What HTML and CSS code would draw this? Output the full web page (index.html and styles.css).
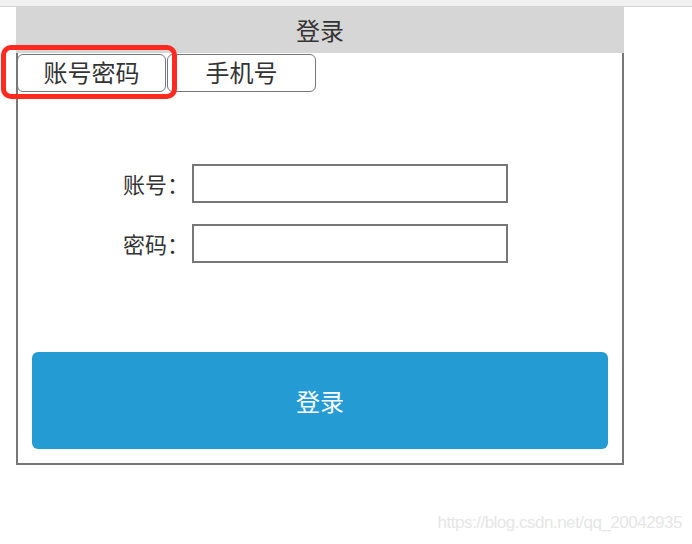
FILE: index.html
```html
<!DOCTYPE html>
<html lang="zh-CN">
<head>
<meta charset="utf-8">
<title>登录</title>
<link rel="stylesheet" href="styles.css">
</head>
<body>
<div class="topbar"></div>
<div class="wrap">
  <div class="header">登录</div>
  <div class="panel">
    <div class="tabs">
      <div class="tab">账号密码</div>
      <div class="tab">手机号</div>
    </div>
    <div class="form">
      <div class="row">
        <span class="label">账号：</span>
        <div class="input"></div>
      </div>
      <div class="row">
        <span class="label">密码：</span>
        <div class="input"></div>
      </div>
    </div>
    <div class="btn">登录</div>
  </div>
</div>
<div class="highlight"></div>
<div class="watermark">https://blog.csdn.net/qq_20042935</div>
</body>
</html>
```

FILE: styles.css
```css
html, body {
  margin: 0;
  padding: 0;
  background: #fff;
}
body {
  position: relative;
  width: 692px;
  height: 544px;
  overflow: hidden;
  font-family: "Noto Sans CJK SC", "Noto Sans", sans-serif;
  color: #333;
}
.topbar {
  height: 6px;
  background: #f1f1f1;
  border-bottom: 1px solid #d2d2d2;
}
.wrap {
  margin-left: 16px;
  width: 608px;
}
.header {
  height: 46px;
  line-height: 46px;
  background: #d6d6d6;
  text-align: center;
  font-size: 24px;
  color: #333;
}
.panel {
  box-sizing: border-box;
  height: 412px;
  border: 2px solid #777;
  border-top: none;
  display: flex;
  flex-direction: column;
}
.tabs {
  display: flex;
  gap: 1px;
  margin-top: 1px;
  margin-left: -1px;
}
.tab {
  box-sizing: border-box;
  width: 149px;
  height: 38px;
  border: 1.5px solid #777;
  border-radius: 6px;
  font-size: 24px;
  line-height: 34px;
  text-align: center;
  color: #333;
}
.form {
  margin-top: 72px;
  padding-left: 105px;
  display: flex;
  flex-direction: column;
  gap: 21px;
}
.row {
  display: flex;
  align-items: center;
  gap: 3px;
}
.label {
  width: 66px;
  font-size: 22px;
  line-height: 39px;
  color: #333;
}
.input {
  box-sizing: border-box;
  width: 316px;
  height: 39px;
  border: 2px solid #777;
  background: #fff;
}
.btn {
  margin: 89px 14px 0;
  height: 97px;
  border-radius: 6px;
  background: #249bd3;
  color: #fff;
  font-size: 24px;
  line-height: 97px;
  text-align: center;
}
.highlight {
  position: absolute;
  left: 1px;
  top: 45px;
  width: 176px;
  height: 54px;
  box-sizing: border-box;
  border: 5px solid #ff2a1f;
  border-radius: 10px;
}
.watermark {
  position: absolute;
  right: 10px;
  top: 513px;
  font-family: "Liberation Sans", Arial, sans-serif;
  font-size: 17px;
  letter-spacing: -0.5px;
  color: #e6e6e6;
  white-space: nowrap;
}
```
